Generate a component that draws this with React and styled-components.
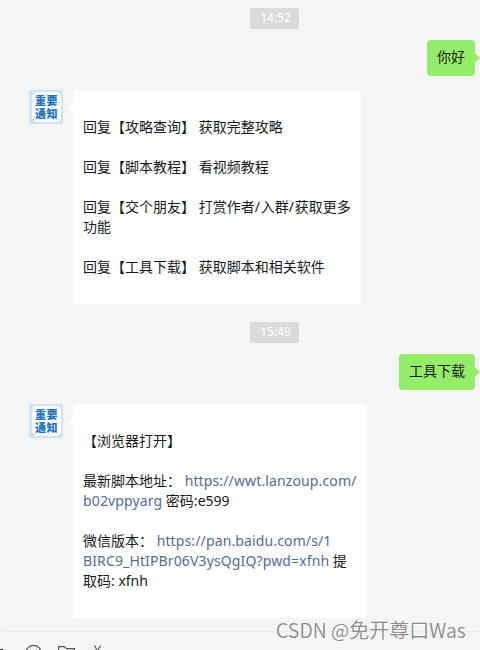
import React from "react";
import styled, { createGlobalStyle } from "styled-components";

const App = () => {
  return (
    <>
      <GlobalStyle />
      <ChatWindow>
        <MessageList>
          <TimeRow>
            <Time>14:52</Time>
          </TimeRow>
          <SentRow>
            <SentBubble>你好</SentBubble>
          </SentRow>
          <ReceivedRow>
            <Notice />
            <ReceivedBubble $width={288}>
              <Line />
              <Line>回复【攻略查询】 获取完整攻略</Line>
              <Line />
              <Line>回复【脚本教程】 看视频教程</Line>
              <Line />
              <Line>
                回复【交个朋友】 打赏作者<Slash>/</Slash>入群<Slash>/</Slash>
                获取更多
              </Line>
              <Line>功能</Line>
              <Line />
              <Line>回复【工具下载】 获取脚本和相关软件</Line>
              <Line />
            </ReceivedBubble>
          </ReceivedRow>
          <TimeRow>
            <Time>15:49</Time>
          </TimeRow>
          <SentRow>
            <SentBubble>工具下载</SentBubble>
          </SentRow>
          <ReceivedRow>
            <Notice />
            <ReceivedBubble $width={294}>
              <Line />
              <Line>【浏览器打开】</Line>
              <Line />
              <Line>
                最新脚本地址： <Link>https://wwt.lanzoup.com/</Link>
              </Line>
              <Line>
                <Link>b02vppyarg</Link> 密码:e599
              </Line>
              <Line />
              <Line>
                微信版本： <Link>https://pan.baidu.com/s/1</Link>
              </Line>
              <Line>
                <Link>BIRC9_HtIPBr06V3ysQgIQ?pwd=xfnh</Link> 提
              </Line>
              <Line>取码: xfnh</Line>
              <Line />
            </ReceivedBubble>
          </ReceivedRow>
        </MessageList>
        <Toolbar>
          <ToolIcons />
        </Toolbar>
        <Watermark>
          CSDN @<span>免开尊口</span>Was
        </Watermark>
      </ChatWindow>
    </>
  );
};

const Notice = () => (
  <Avatar>
    <AvatarText>
      <AvatarLine>重要</AvatarLine>
      <AvatarLine>通知</AvatarLine>
    </AvatarText>
    <Pen viewBox="0 0 8 8">
      <path d="M1 7L2 3.5L3.5 5Z" fill="#f3cf83" />
    </Pen>
  </Avatar>
);

const ToolIcons = () => (
  <Icons viewBox="0 0 160 18" fill="none" stroke="#555" strokeWidth="1.2">
    <path d="M0 17.5H3" stroke="#333" />
    <circle cx="33.5" cy="21" r="7.6" />
    <path d="M30.5 17.5V19.5M36.5 17.5V19.5" />
    <path d="M58.6 20V14.6H64.5L66.5 16.6H74.4V20" />
    <path d="M94.5 13.5L98 20M100.5 13.5L97 20" />
  </Icons>
);

const GlobalStyle = createGlobalStyle`
  body {
    margin: 0;
    background-color: #f5f5f5;
  }
`;

const ChatWindow = styled.div`
  position: relative;
  width: 480px;
  height: 650px;
  overflow: hidden;
  background-color: #f5f5f5;
  color: #1a1a1a;
  font-family: "Noto Sans", "Noto Sans CJK SC", sans-serif;
  font-size: 14px;
  line-height: 20px;
`;

const MessageList = styled.div`
  height: 623px;
  padding-top: 8px;
`;

const TimeRow = styled.div`
  height: 32px;
  padding-left: 250px;
`;

const Time = styled.div`
  box-sizing: border-box;
  width: 49px;
  height: 21px;
  padding-left: 2px;
  border-radius: 2px;
  background-color: #dadada;
  color: #fff;
  font-size: 12px;
  line-height: 19px;
  text-align: center;
`;

const SentRow = styled.div`
  display: flex;
  justify-content: flex-end;
  height: 50px;
  padding-right: 5px;
`;

const ReceivedRow = styled.div`
  display: flex;
  align-items: flex-start;
  gap: 10px;
  height: 232px;
  padding-left: 29px;
`;

const Bubble = styled.div`
  position: relative;
  box-sizing: border-box;
  border-radius: 4px;
  white-space: pre;

  &::after {
    content: "";
    position: absolute;
    top: 12px;
    border: 6px solid transparent;
  }
`;

const SentBubble = styled(Bubble)`
  height: 36px;
  padding: 7px 10px;
  background-color: #95ec69;

  &::after {
    right: -11px;
    border-left-color: #95ec69;
  }
`;

const ReceivedBubble = styled(Bubble)`
  width: ${(props) => props.$width}px;
  padding: 7px 0 7px 10px;
  background-color: #fff;

  &::after {
    left: -11px;
    border-right-color: #fff;
  }
`;

const Line = styled.div`
  height: 20px;
`;

const Link = styled.span`
  color: #576b95;
  letter-spacing: 0.13px;
`;

const Slash = styled.span`
  letter-spacing: 0.8px;
`;

const Avatar = styled.div`
  position: relative;
  box-sizing: border-box;
  display: flex;
  width: 34px;
  height: 34px;
  padding: 2px 2px 2px 3px;
  border-radius: 2px;
  background-color: #cce3fa;
`;

const AvatarText = styled.div`
  flex: 1;
  padding-top: 2px;
  border-radius: 5px;
  background-color: #fff;
  color: #2373bd;
  font-family: "Noto Sans CJK SC", sans-serif;
  font-size: 11px;
  font-weight: 900;
  letter-spacing: 0.5px;
  text-align: center;
`;

const AvatarLine = styled.div`
  height: 12.5px;
  line-height: 12.5px;
`;

const Pen = styled.svg`
  position: absolute;
  left: 2px;
  bottom: 1px;
  width: 8px;
  height: 8px;
`;

const Toolbar = styled.div`
  height: 18px;
  margin-left: 3px;
  border-top: 1px solid #e9e9e9;
`;

const Icons = styled.svg`
  display: block;
  width: 160px;
  height: 18px;
  margin-left: -3px;
`;

const Watermark = styled.div`
  position: absolute;
  left: 276px;
  top: 616px;
  color: #8c8c8c;
  font-family: "Noto Sans CJK SC", sans-serif;
  font-size: 19.5px;
  font-weight: 350;
  line-height: 28px;
  white-space: nowrap;
  text-shadow: 1px 1px 0 #fff;

  span {
    font-size: 20px;
  }
`;

export default App;
